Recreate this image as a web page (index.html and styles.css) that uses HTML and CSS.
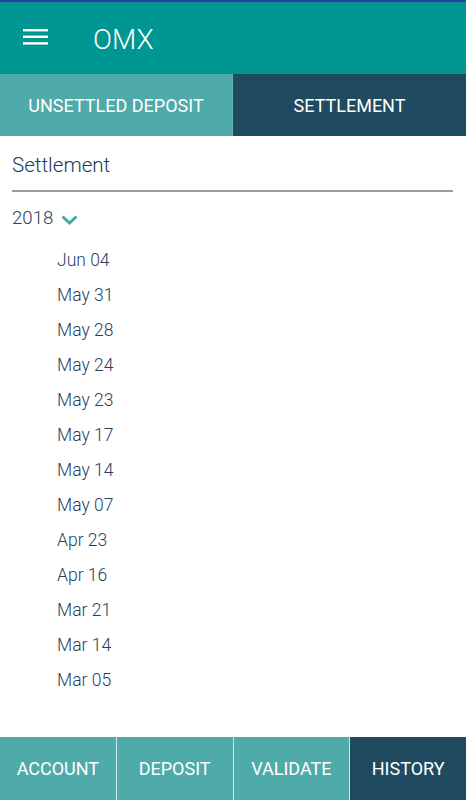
FILE: index.html
```html
<!DOCTYPE html>
<html>
<head>
<meta charset="utf-8">
<link rel="stylesheet" href="styles.css">
</head>
<body>
<div class="app">
  <div class="statusline"></div>
  <header class="appbar">
    <svg class="menu" width="25" height="18" viewBox="0 0 25 18">
      <rect x="0" y="1" width="25" height="2.4" fill="#fff"/>
      <rect x="0" y="7.6" width="25" height="2.4" fill="#fff"/>
      <rect x="0" y="14.2" width="25" height="2.4" fill="#fff"/>
    </svg>
    <span class="title">OMX</span>
  </header>
  <nav class="tabs">
    <div class="tab">UNSETTLED DEPOSIT</div>
    <div class="tab active">SETTLEMENT</div>
  </nav>
  <main class="content">
    <div class="heading">Settlement</div>
    <div class="year">
      <span>2018</span>
      <svg class="chev" width="17" height="10" viewBox="0 0 17 10">
        <polyline points="1.5,1.5 8.5,8 15.5,1.5" fill="none" stroke="#3aa9a5" stroke-width="2.8"/>
      </svg>
    </div>
    <ul class="dates">
      <li>Jun 04</li>
      <li>May 31</li>
      <li>May 28</li>
      <li>May 24</li>
      <li>May 23</li>
      <li>May 17</li>
      <li>May 14</li>
      <li>May 07</li>
      <li>Apr 23</li>
      <li>Apr 16</li>
      <li>Mar 21</li>
      <li>Mar 14</li>
      <li>Mar 05</li>
    </ul>
  </main>
  <footer class="bottomnav">
    <div class="navitem">ACCOUNT</div>
    <div class="navitem">DEPOSIT</div>
    <div class="navitem">VALIDATE</div>
    <div class="navitem active">HISTORY</div>
  </footer>
</div>
</body>
</html>
```
FILE: styles.css
```css
html, body {
  margin: 0;
  padding: 0;
  background: #ffffff;
}
body {
  font-family: Roboto, "Liberation Sans", sans-serif;
}
.app {
  width: 466px;
  height: 800px;
  display: flex;
  flex-direction: column;
  overflow: hidden;
}
.statusline {
  height: 2px;
  background: #2b3f9c;
}
.appbar {
  height: 72px;
  background: #009691;
  display: flex;
  align-items: center;
  padding-left: 23px;
  box-sizing: border-box;
}
.menu {
  margin-bottom: 2px;
}
.title {
  color: #ffffff;
  font-weight: 300;
  font-size: 28px;
  margin-left: 45px;
  margin-top: 3px;
}
.tabs {
  display: grid;
  grid-template-columns: 233px 233px;
  height: 62px;
}
.tab {
  display: flex;
  align-items: center;
  justify-content: center;
  font-size: 18px;
  color: #ffffff;
  background: #4eabaa;
  border-right: 1px solid #5bb5b3;
}
.tab.active {
  background: #1f4a60;
  border-right: none;
}
.content {
  flex: 1;
  padding: 0 13px 0 12px;
}
.heading {
  font-size: 20.6px;
  font-weight: 300;
  line-height: 24px;
  color: #183a5a;
  padding: 17px 0 13px;
  border-bottom: 2px solid #979ca1;
}
.year {
  margin-top: 14px;
  display: flex;
  align-items: center;
  font-size: 18.6px;
  font-weight: 300;
  line-height: 24px;
  color: #1f4160;
}
.chev {
  margin-left: 8px;
  margin-top: 3px;
}
.dates {
  list-style: none;
  margin: 13px 0 0;
  padding: 0 0 0 45px;
}
.dates li {
  font-size: 17.5px;
  font-weight: 300;
  line-height: 35px;
  color: #1f4160;
}
.bottomnav {
  height: 63px;
  display: grid;
  grid-template-columns: repeat(4, 1fr);
  column-gap: 1px;
  background: #cfe6e6;
}
.navitem {
  display: flex;
  align-items: center;
  justify-content: center;
  background: #4eabaa;
  color: #ffffff;
  font-size: 18px;
}
.navitem.active {
  background: #1f4a60;
}
```
